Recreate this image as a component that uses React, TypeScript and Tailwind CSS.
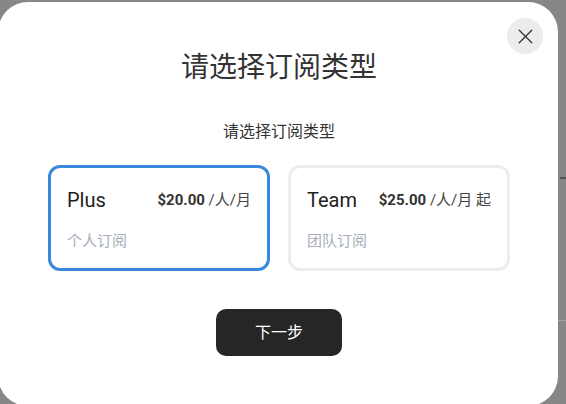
import React from 'react';
import { X } from 'lucide-react';

const plans = [
  { name: 'Plus', price: '$20.00', unit: '/人/月', desc: '个人订阅', selected: true },
  { name: 'Team', price: '$25.00', unit: '/人/月 起', desc: '团队订阅', selected: false },
];

export default function App() {
  return (
    <div
      className="relative w-[566px] h-[404px] overflow-hidden bg-[#878787]"
      style={{ fontFamily: 'Roboto, "Noto Sans CJK SC", sans-serif' }}
    >
      {/* dimmed page behind */}
      <div className="absolute right-0 top-[177px] w-[6px] h-[2px] bg-[#555]" />
      <div className="absolute right-0 top-[320px] w-[8px] h-px bg-[#a3a3a3]" />

      <div className="absolute left-[-2px] top-[2px] w-[560px] h-[404px] bg-white rounded-[30px] flex flex-col items-center pt-[48px] pl-[2px]">
        <button className="absolute right-[15px] top-[16px] w-[36px] h-[36px] rounded-full bg-[#ececec] flex items-center justify-center text-[#333]">
          <X size={25} strokeWidth={1.3} />
        </button>

        <h1 className="text-[28px] leading-[36px] text-[#333] font-normal">请选择订阅类型</h1>
        <p className="mt-[34px] text-[16px] leading-[24px] text-[#333]">请选择订阅类型</p>

        <div className="mt-[21px] flex gap-[18px]">
          {plans.map((p) => (
            <div
              key={p.name}
              className={
                'w-[222px] h-[106px] rounded-[12px] border-[3px] flex flex-col justify-between px-[16px] pt-[20px] pb-[17px] ' +
                (p.selected ? 'border-[#3b88dc]' : 'border-[#ededed]')
              }
            >
              <div className="flex items-center justify-between">
                <span className="text-[20px] leading-[24px] text-[#222]">{p.name}</span>
                <span className="text-[15px] leading-[24px] text-[#444]">
                  <span className="font-bold text-[#333]">{p.price}</span> {p.unit}
                </span>
              </div>
              <div className="text-[15px] leading-[20px] text-[#a5afbb]">{p.desc}</div>
            </div>
          ))}
        </div>

        <button className="mt-[38px] w-[126px] h-[47px] rounded-[10px] bg-[#262626] text-white text-[16px]">
          下一步
        </button>
      </div>
    </div>
  );
}
